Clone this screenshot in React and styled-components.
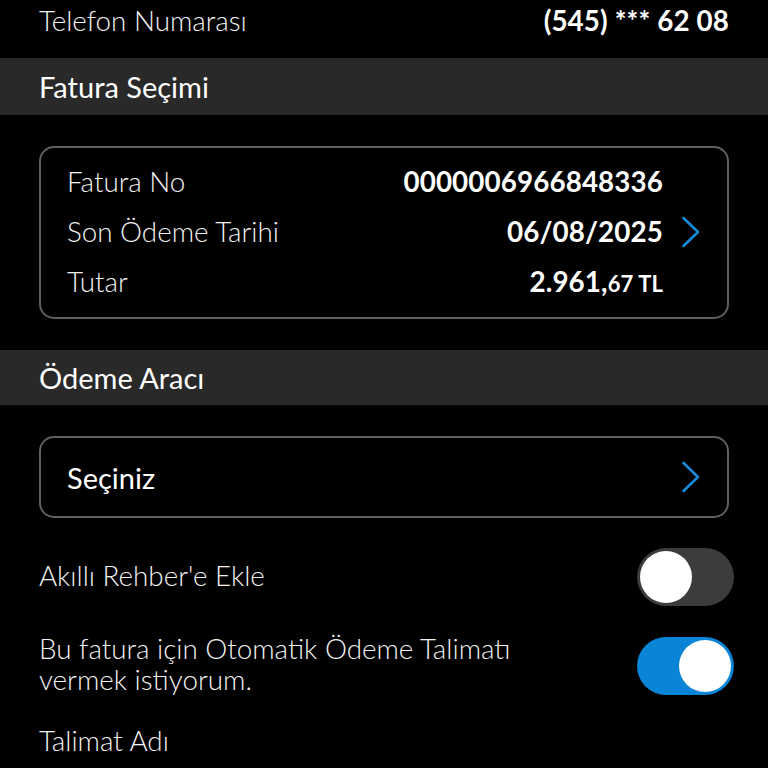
import React from "react";
import styled, { createGlobalStyle } from "styled-components";

const GlobalStyle = createGlobalStyle`
  html, body {
    margin: 0;
    padding: 0;
    background: #000;
  }
  body {
    font-family: Lato, "Noto Sans", "Liberation Sans", sans-serif;
    color: #fff;
    -webkit-font-smoothing: antialiased;
  }
`;

const Screen = styled.div`
  width: 768px;
  height: 768px;
  overflow: hidden;
  background: #000;
  display: flex;
  flex-direction: column;
`;

const InfoRow = styled.div`
  height: 40px;
  padding: 0 39px 2px;
  display: flex;
  align-items: center;
  justify-content: space-between;
`;

const Label = styled.span`
  font-size: 27.8px;
  font-weight: 300;
  color: #f2f2f2;
`;

const Value = styled.span`
  font-size: 27.8px;
  font-weight: 700;
  color: #fff;
  letter-spacing: 0.1px;
`;

const Small = styled.span`
  font-size: 22px;
  font-weight: 700;
`;

const SectionBand = styled.div`
  margin-top: ${(p) => p.$gap}px;
  height: ${(p) => p.$h}px;
  background: #292929;
  padding: 0 39px;
  display: flex;
  align-items: center;
  font-size: 29px;
  font-weight: 400;
  color: #fff;
`;

const Card = styled.div`
  margin: 31px 39px 0;
  border: 2px solid #5f5f62;
  border-radius: 15px;
  box-sizing: border-box;
`;

const DetailList = styled(Card)`
  height: 173px;
  padding: 8px 26px 0 26px;
  display: flex;
  flex-direction: column;
`;

const DetailRow = styled.div`
  height: 50px;
  display: grid;
  grid-template-columns: 1fr auto 38px;
  align-items: center;
`;

const PickerCard = styled(Card)`
  height: 82px;
  padding: 0 26px;
  display: flex;
  align-items: center;
  justify-content: space-between;
`;

const PickerText = styled.span`
  font-size: 29px;
  font-weight: 400;
  color: #fff;
`;

const ChevronCell = styled.div`
  display: flex;
  justify-content: flex-end;
  align-items: center;
  padding-top: 2px;
`;

const ToggleRow = styled.div`
  margin-top: 30px;
  padding: 0 34px 0 39px;
  display: flex;
  align-items: center;
  justify-content: space-between;
  gap: 20px;
`;

const ToggleText = styled.span`
  font-size: 27.8px;
  font-weight: 300;
  line-height: 31px;
  color: #f2f2f2;
  max-width: 540px;
  margin-top: -3px;
`;

const Track = styled.div`
  flex: none;
  width: 97px;
  height: 58px;
  border-radius: 29px;
  box-sizing: border-box;
  padding: 3px 3px;
  background: ${(p) => (p.$on ? "#0a84d6" : "#3c3c3e")};
  display: flex;
  align-items: center;
  justify-content: ${(p) => (p.$on ? "flex-end" : "flex-start")};
`;

const Knob = styled.div`
  width: 52px;
  height: 52px;
  border-radius: 50%;
  background: #fff;
`;

const FieldLabel = styled.div`
  margin-top: 30px;
  padding: 0 39px;
  font-size: 27.8px;
  font-weight: 300;
  line-height: 31px;
  color: #f2f2f2;
`;

const Chevron = () => (
  <svg width="20" height="32" viewBox="0 0 20 32" fill="none">
    <path
      d="M2.5 2 L17 16 L2.5 30"
      stroke="#1a8ad6"
      strokeWidth="2.6"
      strokeLinecap="round"
      strokeLinejoin="round"
    />
  </svg>
);

const Toggle = ({ on }) => (
  <Track $on={on}>
    <Knob />
  </Track>
);

export default function App() {
  return (
    <Screen>
      <GlobalStyle />
      <InfoRow>
        <Label>Telefon Numarası</Label>
        <Value>(545) *** 62 08</Value>
      </InfoRow>

      <SectionBand $gap={16} $h={57}>Fatura Seçimi</SectionBand>

      <DetailList>
        <DetailRow>
          <Label>Fatura No</Label>
          <Value>0000006966848336</Value>
          <span />
        </DetailRow>
        <DetailRow>
          <Label>Son Ödeme Tarihi</Label>
          <Value>06/08/2025</Value>
          <ChevronCell>
            <Chevron />
          </ChevronCell>
        </DetailRow>
        <DetailRow>
          <Label>Tutar</Label>
          <Value>
            2.961,<Small>67 TL</Small>
          </Value>
          <span />
        </DetailRow>
      </DetailList>

      <SectionBand $gap={31} $h={55}>Ödeme Aracı</SectionBand>

      <PickerCard>
        <PickerText>Seçiniz</PickerText>
        <Chevron />
      </PickerCard>

      <ToggleRow>
        <ToggleText>Akıllı Rehber'e Ekle</ToggleText>
        <Toggle on={false} />
      </ToggleRow>

      <ToggleRow>
        <ToggleText>
          Bu fatura için Otomatik Ödeme Talimatı
          <br />
          vermek istiyorum.
        </ToggleText>
        <Toggle on />
      </ToggleRow>

      <FieldLabel>Talimat Adı</FieldLabel>
    </Screen>
  );
}
